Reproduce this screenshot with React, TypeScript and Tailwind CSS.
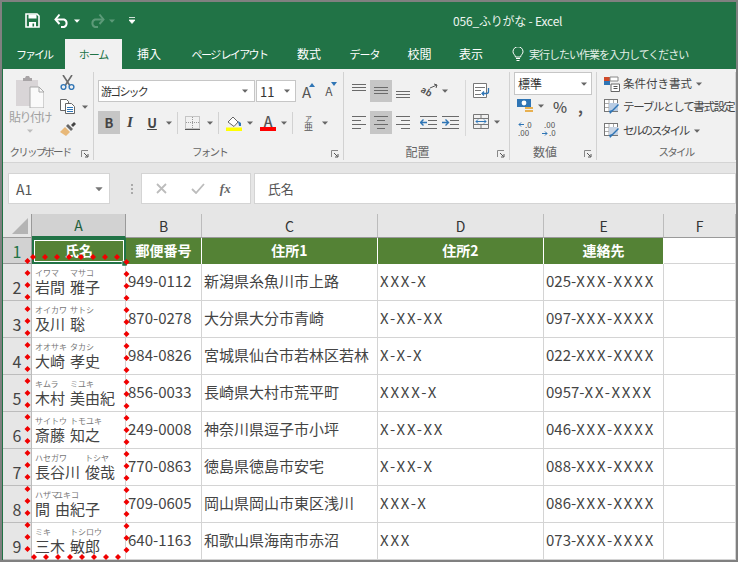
import type { ReactNode } from "react";

const rows = [
  { n: 2, fam: "岩間", giv: "雅子", fk: "イワマ", gk: "マサコ", zip: "949-0112", a1: "新潟県糸魚川市上路", a2: "XXX-X", tel: "025-", telX: "XXX-XXXX" },
  { n: 3, fam: "及川", giv: "聡", fk: "オイカワ", gk: "サトシ", zip: "870-0278", a1: "大分県大分市青崎", a2: "X-XX-XX", tel: "097-", telX: "XXX-XXXX" },
  { n: 4, fam: "大崎", giv: "孝史", fk: "オオサキ", gk: "タカシ", zip: "984-0826", a1: "宮城県仙台市若林区若林", a2: "X-X-X", tel: "022-", telX: "XXX-XXXX" },
  { n: 5, fam: "木村", giv: "美由紀", fk: "キムラ", gk: "ミユキ", zip: "856-0033", a1: "長崎県大村市荒平町", a2: "XXXX-X", tel: "0957-", telX: "XX-XXXX" },
  { n: 6, fam: "斎藤", giv: "知之", fk: "サイトウ", gk: "トモユキ", zip: "249-0008", a1: "神奈川県逗子市小坪", a2: "X-XX-XX", tel: "046-", telX: "XXX-XXXX" },
  { n: 7, fam: "長谷川", giv: "俊哉", fk: "ハセガワ", gk: "トシヤ", zip: "770-0863", a1: "徳島県徳島市安宅", a2: "X-XX-X", tel: "088-", telX: "XXX-XXXX" },
  { n: 8, fam: "間", giv: "由紀子", fk: "ハザマ", gk: "ユキコ", zip: "709-0605", a1: "岡山県岡山市東区浅川", a2: "XXX-X", tel: "086-", telX: "XXX-XXXX" },
  { n: 9, fam: "三木", giv: "敏郎", fk: "ミキ", gk: "トシロウ", zip: "640-1163", a1: "和歌山県海南市赤沼", a2: "XXX", tel: "073-", telX: "XXX-XXXX" },
];

function Caret({ color = "#666", className = "" }: { color?: string; className?: string }) {
  return (
    <svg width="6" height="4" viewBox="0 0 6 4" className={`shrink-0 ${className}`}>
      <path d="M0 0.5h6L3 3.7z" fill={color} />
    </svg>
  );
}

function Lines({ ys, xs }: { ys: number[]; xs: [number, number][] }) {
  return (
    <svg width="16" height="16" viewBox="0 0 16 16">
      {ys.map((y, i) => (
        <path key={i} d={`M${xs[i][0]} ${y}H${xs[i][1]}`} stroke="#6a6a6a" strokeWidth="1" />
      ))}
    </svg>
  );
}

function IndentIcon({ inc }: { inc?: boolean }) {
  return (
    <svg width="17" height="13" viewBox="0 0 17 13">
      <path d="M0 0.5H17M8 4.5H17M8 8.5H17M0 12.5H17" stroke="#6a6a6a" />
      <path d={inc ? "M0 6.5H6M3.5 3.5l3 3-3 3" : "M7 6.5H1M3.5 3.5l-3 3 3 3"} stroke="#2f75b5" strokeWidth="1.4" fill="none" />
    </svg>
  );
}

function Launcher() {
  return (
    <svg width="8" height="8" viewBox="0 0 8 8" className="absolute right-[4px] bottom-[2px]">
      <path d="M0.5 7V0.5H7" stroke="#888" fill="none" />
      <path d="M3 3l3.5 3.5M7 4v3H4" stroke="#555" fill="none" />
    </svg>
  );
}

function Group({ w, label, labelClass, launcher = true, children }: { w: string; label: string; labelClass: string; launcher?: boolean; children: ReactNode }) {
  return (
    <div className={`${w} relative flex h-[88px] shrink-0 flex-col border-r border-[#d2d2d2]`}>
      <div className="h-[72px] shrink-0">{children}</div>
      <div className={`flex h-[16px] items-center justify-center leading-none text-[#666] ${labelClass}`}>{label}</div>
      {launcher && <Launcher />}
    </div>
  );
}

function Sep() {
  return <div className="mx-[5px] h-[22px] w-px bg-[#d2d2d2]" />;
}

function TableStyleIcon({ fill }: { fill: string }) {
  return (
    <svg width="16" height="16" viewBox="0 0 16 16" className="shrink-0">
      <rect x="0.5" y="0.5" width="13" height="12" fill="#fff" stroke="#777" />
      <path d="M5 1v11M9.5 1v11M1 4.5h12M1 8.5h12" stroke="#aaa" />
      <path d="M5 4h9v8H5z" fill={fill} />
      <path d="M15 6l-6 6-3 3-1-3 3-1 6-6z" fill="#2f75b5" />
    </svg>
  );
}

export default function App() {
  const hdrCell = "flex items-center justify-center border-r";
  const bodyCell = "flex items-center border-r border-b border-[#d4d4d4] bg-white pl-[2px] pb-[3px] text-[15px] leading-none text-[#444] whitespace-nowrap";

  // 赤い点線の座標
  const dots: [number, number][] = [];
  for (let i = 0; i < 8; i++) {
    dots.push([33 + i * 12, 257]);
    dots.push([34 + i * 12, 557]);
  }
  for (let i = 0; i < 25; i++) {
    dots.push([27.5, 261 + i * 12]);
    dots.push([126.5, 262 + i * 12]);
  }

  return (
    <div className="relative h-[562px] w-[738px] overflow-hidden bg-[#808080] p-[2px] font-['Noto_Sans_CJK_JP','Noto_Sans',sans-serif]">
      <div className="flex h-[558px] flex-col border-l border-[#217346] bg-[#f1f1f1]">
        {/* タイトルバー */}
        <div className="flex h-[37px] shrink-0 items-center bg-[#217346] pl-[22px] text-white">
          <svg width="15" height="15" viewBox="0 0 15 15">
            <path d="M1 1h11l2 2v11H1z" fill="none" stroke="#fff" strokeWidth="1.6" />
            <path d="M3.5 1.5h8v4h-8zM4 9h7v5H4z" fill="#fff" />
            <path d="M7.5 10.5h1.6v3H7.5z" fill="#217346" />
          </svg>
          <svg width="16" height="15" viewBox="0 0 16 15" className="ml-[14px]">
            <path d="M2 6.5h8a4 4 0 0 1 0 7.5H7" fill="none" stroke="#fff" strokeWidth="2" />
            <path d="M5.5 1.5L1.5 6.5l4 4.5" fill="none" stroke="#fff" strokeWidth="2" />
          </svg>
          <Caret color="#fff" className="ml-[4px]" />
          <svg width="16" height="15" viewBox="0 0 16 15" className="ml-[9px]">
            <path d="M14 6.5H6a4 4 0 0 0 0 7.5h3" fill="none" stroke="#5c9a78" strokeWidth="2" />
            <path d="M10.5 1.5l4 5-4 4.5" fill="none" stroke="#5c9a78" strokeWidth="2" />
          </svg>
          <Caret color="#5c9a78" className="ml-[4px]" />
          <svg width="6" height="7" viewBox="0 0 6 7" className="ml-[14px]">
            <path d="M0 0.5h6M0 3h6L3 6.5z" fill="#fff" stroke="#fff" strokeWidth="0.8" />
          </svg>
          <span className="ml-[318px] text-[12px] leading-none tracking-[-0.2px] whitespace-nowrap text-[#eef5f0]">056_ふりがな - Excel</span>
        </div>

        {/* タブ */}
        <div className="flex h-[30px] shrink-0 items-stretch bg-[#217346] text-[12px] leading-none text-white">
          <div className="flex w-[62px] items-center justify-center text-[11px] tracking-[-2px]">ファイル</div>
          <div className="flex w-[57px] items-center justify-center bg-[#f1f1f1] text-[11px] tracking-[-1px] text-[#217346]">ホーム</div>
          <div className="flex w-[54px] items-center justify-center">挿入</div>
          <div className="flex w-[107px] items-center justify-center text-[11px] tracking-[-1.600px] whitespace-nowrap">ページ レイアウト</div>
          <div className="flex w-[52px] items-center justify-center">数式</div>
          <div className="flex w-[59px] items-center justify-center text-[11px] tracking-[-1px]">データ</div>
          <div className="flex w-[51px] items-center justify-center">校閲</div>
          <div className="flex w-[52px] items-center justify-center">表示</div>
          <div className="ml-[15px] flex items-center text-[11px] tracking-[-1px] whitespace-nowrap text-[#e4efe8]">
            <svg width="12" height="15" viewBox="0 0 12 15" className="mr-[5px]">
              <path d="M3.5 10C3 7.5 1 7 1 4.7a5 5 0 0 1 10 0C11 7 9 7.5 8.500 10z" fill="none" stroke="#fff" />
              <path d="M4 11.500h4M4.500 13.500h3" stroke="#fff" />
            </svg>
            実行したい作業を入力してください
          </div>
        </div>

        {/* リボン */}
        <div className="flex h-[94px] shrink-0 border-b border-[#d4d4d4] pt-[3px] text-[#444]">
          <Group w="w-[91px]" label="クリップボード" labelClass="pr-[16px] text-[10.500px] tracking-[-1.800px]">
            <div className="flex">
              <div className="flex w-[54px] flex-col items-center pt-[4px]">
                <svg width="28" height="32" viewBox="0 0 28 32">
                  <path d="M0 4h22v26H0z" fill="#d9d5d7" />
                  <path d="M7 5V2h2l1-2h3l1 2h2v3z" fill="#a8a4a6" />
                  <path d="M14 11h9l5 5v16H14z" fill="#fafafa" stroke="#a8a8a8" />
                  <path d="M23 11v5h5" fill="none" stroke="#a8a8a8" />
                </svg>
                <span className="mt-px text-[12px] leading-[16px] tracking-[-1.500px] whitespace-nowrap text-[#a0a0a0]">貼り付け</span>
                <Caret color="#bdbdbd" className="mt-[4px]" />
              </div>
              <div className="flex flex-col pl-[3px] pt-[3px]">
                <svg width="15" height="15" viewBox="0 0 15 15">
                  <path d="M3 0l6.500 10M12 0L5.500 10" stroke="#6a6a6a" strokeWidth="1.6" />
                  <circle cx="3.500" cy="12" r="2.400" fill="none" stroke="#2f75b5" strokeWidth="1.4" />
                  <circle cx="11.500" cy="12" r="2.400" fill="none" stroke="#2f75b5" strokeWidth="1.4" />
                </svg>
                <div className="mt-[9px] flex items-center">
                  <svg width="15" height="15" viewBox="0 0 15 15">
                    <path d="M0.500 0.500h6l2 2v9h-8z" fill="#fff" stroke="#666" />
                    <path d="M5.500 4.500h6l3 3v7h-9z" fill="#fff" stroke="#666" />
                    <path d="M7 8.500h6M7 10.500h6M7 12.500h6" stroke="#2f75b5" />
                  </svg>
                  <Caret className="ml-[7px]" />
                </div>
                <svg width="16" height="15" viewBox="0 0 16 15" className="mt-[8px]">
                  <path d="M0 10l5-5 5 5-4 4z" fill="#e8b878" />
                  <path d="M6 4l5 5 2-2-5-5z" fill="#666" />
                  <path d="M11 3l3-3 2 2-3 3z" fill="#444" />
                </svg>
              </div>
            </div>
          </Group>

          <Group w="w-[250px]" label="フォント" labelClass="pr-[18px] text-[10.500px] tracking-[-1.800px]">
            <div className="pl-[4px] pt-[8px]">
              <div className="flex h-[22px] items-center">
                <div className="flex h-[22px] w-[157px] items-center justify-between border border-[#c6c6c6] bg-white pl-[2px] pr-[6px] text-[11px] leading-none tracking-[-1.800px] text-[#333]">
                  游ゴシック
                  <Caret />
                </div>
                <div className="ml-px flex h-[22px] w-[40px] items-center justify-between border border-[#c6c6c6] bg-white pl-[3px] pr-[5px] text-[13px] leading-none text-[#333]">
                  11
                  <Caret />
                </div>
                <span className="relative ml-[6px] text-[15px] leading-none text-[#555]">
                  A
                  <svg width="6" height="4" viewBox="0 0 6 4" className="absolute -right-[4px] top-[-1px]">
                    <path d="M0 4h6L3 0z" fill="#2f75b5" />
                  </svg>
                </span>
                <span className="relative ml-[14px] text-[12px] leading-none text-[#555]">
                  A
                  <svg width="6" height="4" viewBox="0 0 6 4" className="absolute -right-[5px] top-[-3px]">
                    <path d="M0 0h6L3 4z" fill="#2f75b5" />
                  </svg>
                </span>
              </div>
              <div className="mt-[9px] flex h-[23px] items-center">
                <div className="flex h-[23px] w-[22px] items-center justify-center bg-[#c6c6c6] text-[13px] font-bold leading-none text-[#444]">B</div>
                <div className="w-[20px] text-center font-['Liberation_Serif',serif] text-[15px] font-bold italic leading-none text-[#444]">I</div>
                <div className="w-[24px] text-center text-[13px] font-bold leading-none text-[#444] underline">U</div>
                <Caret className="ml-[2px]" />
                <Sep />
                <svg width="15" height="14" viewBox="0 0 15 14" className="ml-[2px]">
                  <path d="M0.500 0.500h14v12h-14z" fill="none" stroke="#999" strokeDasharray="1 1" />
                  <path d="M7.500 1v12M1 6.500h13" stroke="#999" strokeDasharray="1 1" />
                  <path d="M0 13.500h15" stroke="#555" />
                </svg>
                <Caret className="ml-[7px]" />
                <Sep />
                <svg width="16" height="16" viewBox="0 0 16 16" className="ml-[2px]">
                  <path d="M2 7l5-5 5 5-4 4.500z" fill="#fff" stroke="#666" />
                  <path d="M12 6l3 2v3h-2z" fill="#2f75b5" />
                  <path d="M0 12.500h16V16H0z" fill="#ffff00" />
                </svg>
                <Caret className="ml-[5px]" />
                <div className="ml-[7px] flex w-[16px] flex-col items-center">
                  <span className="text-[14px] font-medium leading-[12px] text-[#555]">A</span>
                  <div className="h-[4px] w-[16px] bg-[#ff0000]" />
                </div>
                <Caret className="ml-[5px]" />
                <Sep />
                <div className="ml-[6px] flex w-[9px] flex-col items-center leading-none text-[#555]">
                  <span className="text-[7px] leading-[8px]">ア</span>
                  <span className="text-[9px] leading-[10px]">亜</span>
                </div>
                <Caret className="ml-[9px]" />
              </div>
            </div>
          </Group>

          <Group w="w-[166px]" label="配置" labelClass="pr-[18px] text-[12px]">
            <div className="flex pt-[8px]">
              <div className="w-[121px] pl-[4px]">
                <div className="flex h-[22px] items-center">
                  <div className="flex h-[22px] w-[22px] items-center justify-center">
                    <Lines ys={[1.5, 4.5, 7.5]} xs={[[1, 15], [1, 15], [1, 15]]} />
                  </div>
                  <div className="flex h-[22px] w-[22px] items-center justify-center bg-[#c6c6c6]">
                    <Lines ys={[4.5, 7.5, 10.5]} xs={[[1, 15], [1, 15], [1, 15]]} />
                  </div>
                  <div className="flex h-[22px] w-[22px] items-center justify-center">
                    <Lines ys={[8.5, 11.5, 14.5]} xs={[[1, 15], [1, 15], [1, 15]]} />
                  </div>
                  <svg width="19" height="16" viewBox="0 0 19 16" className="ml-[6px] overflow-visible">
                    <text x="1" y="11" fontSize="9" fontWeight="600" fill="#555" transform="rotate(30 5 8)">ab</text>
                    <path d="M10 5l7-3M14 1l3 1-1 3" fill="none" stroke="#555" />
                  </svg>
                  <Caret className="ml-[3px]" />
                </div>
                <div className="mt-[9px] flex h-[23px] items-center">
                  <div className="flex h-[23px] w-[22px] items-center justify-center">
                    <Lines ys={[1.5, 5.5, 9.5, 13.5]} xs={[[1, 15], [1, 10], [1, 15], [1, 10]]} />
                  </div>
                  <div className="flex h-[23px] w-[22px] items-center justify-center bg-[#c6c6c6]">
                    <Lines ys={[1.5, 5.500, 9.5, 13.5]} xs={[[1, 15], [4, 12], [1, 15], [4, 12]]} />
                  </div>
                  <div className="flex h-[23px] w-[22px] items-center justify-center">
                    <Lines ys={[1.5, 5.5, 9.5, 13.5]} xs={[[1, 15], [6, 15], [1, 15], [6, 15]]} />
                  </div>
                  <div className="ml-[6px]">
                    <IndentIcon />
                  </div>
                  <div className="ml-[5px]">
                    <IndentIcon inc />
                  </div>
                </div>
              </div>
              <div className="h-[56px] w-px bg-[#d8d8d8]" />
              <div className="pl-[7px] pt-[3px]">
                <svg width="17" height="15" viewBox="0 0 17 15">
                  <path d="M0.500 0.500h13v14h-13z" fill="#fff" stroke="#777" />
                  <path d="M2 4.500h10M2 7.500h6M2 11.500h6" stroke="#777" />
                  <path d="M15.500 5v3.500a2 2 0 0 1-2 2H9M11 8.500l-2 2 2 2" fill="none" stroke="#2f75b5" strokeWidth="1.300" />
                </svg>
                <div className="mt-[16px] flex items-center">
                  <svg width="16" height="15" viewBox="0 0 16 15">
                    <path d="M0.500 0.500h15v14h-15zM1 4.500h14M1 10.500h14M8 1v3M8 11v3" fill="none" stroke="#777" />
                    <path d="M3 7.500h10M5 5.500l-2 2 2 2M11 5.500l2 2-2 2" fill="none" stroke="#2f75b5" />
                  </svg>
                  <Caret className="ml-[5px]" />
                </div>
              </div>
            </div>
          </Group>

          <Group w="w-[87px]" label="数値" labelClass="pr-[16px] text-[12px]">
            <div className="pl-[4px]">
              <div className="flex h-[23px] w-[78px] items-center justify-between border border-[#c6c6c6] bg-white pl-[3px] pr-[4px] text-[12px] leading-none text-[#333]">
                標準
                <Caret />
              </div>
              <div className="mt-[2px] flex h-[18px] items-center pl-[3px]">
                <svg width="16" height="14" viewBox="0 0 16 14">
                  <path d="M0 0h14v8H0z" fill="#2f75b5" />
                  <circle cx="7" cy="4" r="2.400" fill="#fff" />
                  <path d="M8 8h8v2H8zM8 11h8v2H8z" fill="#e8b050" />
                </svg>
                <Caret className="ml-[5px]" />
                <span className="ml-[9px] text-[15px] font-medium leading-none text-[#555]">%</span>
                <span className="ml-[11px] text-[15px] font-bold leading-none text-[#555]">,</span>
              </div>
              <div className="mt-[6px] flex pl-[4px]">
                <svg width="15" height="16" viewBox="0 0 15 16" className="overflow-visible">
                  <path d="M6 3.500H1M3 1.500l-2 2 2 2" fill="none" stroke="#2f75b5" />
                  <text x="7" y="7" fontSize="8" fill="#555">.0</text>
                  <text x="0" y="15" fontSize="8" fill="#555">.00</text>
                </svg>
                <svg width="15" height="16" viewBox="0 0 15 16" className="ml-[8px] overflow-visible">
                  <text x="3" y="7" fontSize="8" fill="#555">.00</text>
                  <path d="M1 12.500h5M4 10.500l2 2-2 2" fill="none" stroke="#2f75b5" />
                  <text x="8" y="15" fontSize="8" fill="#555">.0</text>
                </svg>
              </div>
            </div>
          </Group>

          <Group w="w-[139px]" label="スタイル" labelClass="pl-[20px] text-[10.500px] tracking-[-1.800px]" launcher={false}>
            <div className="pl-[7px] pt-[4px] leading-none">
              <div className="flex h-[16px] items-center">
                <svg width="16" height="16" viewBox="0 0 16 16" className="mr-[3px] shrink-0">
                  <path d="M0 1h6v4H0z" fill="#d04a2a" />
                  <path d="M0 5h6v4H0z" fill="#2f75b5" />
                  <path d="M6 1h8v4H6z" fill="#fff" stroke="#888" />
                  <path d="M7 8h8.500v7.500H7z" fill="#fff" stroke="#666" />
                  <path d="M9.500 10.500h4M9.500 12.500h4" stroke="#555" />
                </svg>
                <span className="text-[11.500px] whitespace-nowrap">条件付き書式</span>
                <Caret className="ml-[4px]" />
              </div>
              <div className="mt-[7px] flex h-[16px] items-center">
                <div className="mr-[3px]">
                  <TableStyleIcon fill="#b8cce4" />
                </div>
                <span className="text-[11.500px] tracking-[-1.300px] whitespace-nowrap">テーブルとして書式設定</span>
              </div>
              <div className="mt-[8px] flex h-[16px] items-center">
                <div className="mr-[3px]">
                  <TableStyleIcon fill="#c8d4e4" />
                </div>
                <span className="text-[11.500px] tracking-[-2.200px] whitespace-nowrap">セルのスタイル</span>
                <Caret className="ml-[6px]" />
              </div>
            </div>
          </Group>
        </div>

        {/* 数式バー */}
        <div className="flex h-[51px] shrink-0 bg-[#e6e6e6] pt-[10px]">
          <div className="ml-[5px] flex h-[31px] w-[102px] items-center justify-between border border-[#d4d4d4] bg-white pl-[7px] pr-[7px] text-[14px] leading-none text-[#555]">
            A1
            <Caret color="#777" className="scale-125" />
          </div>
          <div className="ml-[14px] flex h-[31px] w-[17px] flex-col items-center justify-center gap-[2px]">
            <div className="h-[2px] w-[2px] bg-[#aaa]" />
            <div className="h-[2px] w-[2px] bg-[#aaa]" />
            <div className="h-[2px] w-[2px] bg-[#aaa]" />
          </div>
          <div className="flex h-[31px] w-[110px] items-center border border-[#d4d4d4] bg-white">
            <svg width="11" height="11" viewBox="0 0 11 11" className="ml-[14px]">
              <path d="M1 1l9 9M10 1l-9 9" stroke="#bcbcbc" strokeWidth="1.800" />
            </svg>
            <svg width="14" height="11" viewBox="0 0 14 11" className="ml-[24px]">
              <path d="M1 6l4 4 8-9" fill="none" stroke="#bcbcbc" strokeWidth="1.800" />
            </svg>
            <span className="ml-[15px] font-['Liberation_Serif',serif] text-[13px] font-bold italic leading-none text-[#666]">fx</span>
          </div>
          <div className="ml-[3px] flex h-[31px] w-[483px] items-center border border-[#d4d4d4] bg-white pl-[13px] text-[13px] leading-none text-[#555]">氏名</div>
        </div>

        {/* シート */}
        <div className="grid grid-cols-[29px_94px_76px_176px_166px_120px_72px] grid-rows-[24px_26px_repeat(8,37px)] bg-white">
          <div className="flex items-end justify-end border-r border-b border-[#9a9a9a] bg-[#e6e6e6] pb-[3px] pr-[3px]">
            <svg width="16" height="16" viewBox="0 0 16 16">
              <path d="M16 0v16H0z" fill="#b4b4b4" />
            </svg>
          </div>
          <div className={`${hdrCell} border-b-2 border-b-[#217346] border-r-[#9a9a9a] bg-[#d2d2d2] text-[14px] leading-none text-[#1f5f3c]`}>A</div>
          {["B", "C", "D", "E", "F"].map((c) => (
            <div key={c} className={`${hdrCell} border-b border-b-[#9a9a9a] border-r-[#bcbcbc] bg-[#e6e6e6] text-[14px] leading-none text-[#333]`}>
              {c}
            </div>
          ))}

          <div className="flex items-center justify-center border-r border-b border-[#9a9a9a] bg-[#d2d2d2] text-[16px] leading-none text-[#217346]">1</div>
          <div className="flex items-center justify-center border-2 border-[#217346] bg-[#548235] pb-[2px] text-[14px] font-bold leading-none text-white shadow-[inset_0_0_0_1px_#fff]">氏名</div>
          {["郵便番号", "住所1", "住所2", "連絡先"].map((h) => (
            <div key={h} className={`${hdrCell} border-r-white bg-[#548235] pb-[2px] text-[14px] font-bold leading-none text-white`}>
              {h}
            </div>
          ))}
          <div className="border-r border-b border-[#d4d4d4] bg-white" />

          {rows.map((r) => (
            <div key={r.n} className="contents">
              <div className="flex items-end justify-center border-r border-b border-[#bcbcbc] bg-[#e6e6e6] pb-[5px] text-[16px] leading-none text-[#444]">{r.n}</div>
              <div className="flex gap-[5px] border-r border-b border-[#d4d4d4] bg-white pl-[3px] pt-[4px]">
                <div className="flex flex-col" style={{ width: r.fam.length * 15 }}>
                  <span className="h-[9px] text-[8px] leading-[9px] whitespace-nowrap text-[#777]">{r.fk}</span>
                  <span className="mt-px text-[15px] leading-[18px] whitespace-nowrap text-[#444]">{r.fam}</span>
                </div>
                <div className="flex flex-col">
                  <span className="h-[9px] text-[8px] leading-[9px] whitespace-nowrap text-[#777]">{r.gk}</span>
                  <span className="mt-px text-[15px] leading-[18px] whitespace-nowrap text-[#444]">{r.giv}</span>
                </div>
              </div>
              <div className={bodyCell}>{r.zip}</div>
              <div className={bodyCell}>{r.a1}</div>
              <div className={`${bodyCell} tracking-[1.800px]`}>{r.a2}</div>
              <div className={bodyCell}>
                {r.tel}
                <span className="tracking-[1.800px]">{r.telX}</span>
              </div>
              <div className="border-r border-b border-[#d4d4d4] bg-white" />
            </div>
          ))}
        </div>
      </div>

      {/* 赤い点線の枠 */}
      <svg width="738" height="562" viewBox="0 0 738 562" className="pointer-events-none absolute left-0 top-0">
        <rect x="122" y="261" width="5" height="5" fill="#217346" stroke="#fff" strokeWidth="0.5" />
        {dots.map(([x, y], i) => (
          <path key={i} d={`M${x} ${y - 3}L${x + 3} ${y}L${x} ${y + 3}L${x - 3} ${y}z`} fill="#f00000" />
        ))}
      </svg>
    </div>
  );
}
